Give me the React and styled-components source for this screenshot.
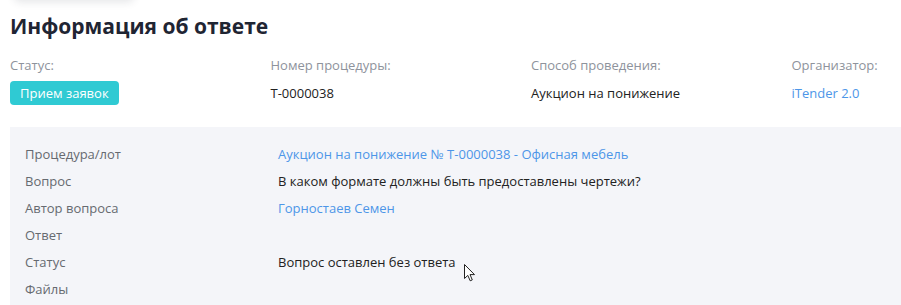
import React from "react";
import styled, { createGlobalStyle } from "styled-components";

const Global = createGlobalStyle`
  html, body { margin: 0; padding: 0; background: #fff; }
  body { font-family: "Open Sans", "Noto Sans", sans-serif; overflow: hidden; }
`;

const Page = styled.div`
  position: relative;
  padding: 12px 0 0 10px;
  width: 891px;
  height: 293px;
  overflow: hidden;
`;

const CardShadow = styled.div`
  position: absolute;
  top: -30px;
  left: 14px;
  width: 120px;
  height: 30px;
  background: #fff;
  border-radius: 6px;
  box-shadow: 0 2px 8px rgba(30, 40, 60, 0.12);
`;

const Title = styled.h1`
  margin: 0;
  font-size: 21px;
  line-height: 28px;
  font-weight: 700;
  color: #1f2533;
`;

const Summary = styled.div`
  display: grid;
  grid-template-columns: repeat(4, 260.5px);
  margin-top: 15px;
`;

const Field = styled.div`
  display: flex;
  flex-direction: column;
  align-items: flex-start;
  gap: 6px;
`;

const FieldLabel = styled.div`
  font-size: 13px;
  line-height: 20px;
  color: #8e939c;
`;

const FieldValue = styled.div`
  font-size: 13px;
  line-height: 24px;
  color: ${(p) => (p.$link ? "#4d96e8" : "#222")};
`;

const Badge = styled.span`
  display: inline-block;
  height: 24px;
  line-height: 24px;
  padding: 0 10px;
  border-radius: 4px;
  background: #2fcad3;
  color: #fff;
  font-size: 13px;
`;

const Panel = styled.div`
  margin-top: 22px;
  background: #f4f5f9;
  padding: 13px 15px;
  display: grid;
  grid-template-columns: 253px 1fr;
  grid-auto-rows: 27px;
  align-items: center;
`;

const RowLabel = styled.div`
  font-size: 13px;
  color: #666a70;
`;

const RowValue = styled.div`
  font-size: 13px;
  color: ${(p) => (p.$link ? "#4d96e8" : "#222")};
`;

const Cursor = styled.svg`
  position: absolute;
  left: 464px;
  top: 264px;
`;

const rows = [
  ["Процедура/лот", "Аукцион на понижение № Т-0000038 - Офисная мебель", true],
  ["Вопрос", "В каком формате должны быть предоставлены чертежи?", false],
  ["Автор вопроса", "Горностаев Семен", true],
  ["Ответ", "", false],
  ["Статус", "Вопрос оставлен без ответа", false],
  ["Файлы", "", false],
];

export default function App() {
  return (
    <>
      <Global />
      <Page>
        <CardShadow />
        <Title>Информация об ответе</Title>
        <Summary>
          <Field>
            <FieldLabel>Статус:</FieldLabel>
            <Badge>Прием заявок</Badge>
          </Field>
          <Field>
            <FieldLabel>Номер процедуры:</FieldLabel>
            <FieldValue>Т-0000038</FieldValue>
          </Field>
          <Field>
            <FieldLabel>Способ проведения:</FieldLabel>
            <FieldValue>Аукцион на понижение</FieldValue>
          </Field>
          <Field>
            <FieldLabel>Организатор:</FieldLabel>
            <FieldValue $link>iTender 2.0</FieldValue>
          </Field>
        </Summary>
        <Panel>
          {rows.map(([label, value, link]) => (
            <React.Fragment key={label}>
              <RowLabel>{label}</RowLabel>
              <RowValue $link={link}>{value}</RowValue>
            </React.Fragment>
          ))}
        </Panel>
        <Cursor width="12" height="18" viewBox="0 0 12 18">
          <path
            d="M0.5 0.5 L0.5 14.5 L3.8 11.4 L6.2 16.8 L8.3 15.9 L6 10.6 L10.5 10.6 Z"
            fill="#fff"
            stroke="#222"
            strokeWidth="1"
            strokeLinejoin="round"
          />
        </Cursor>
      </Page>
    </>
  );
}
